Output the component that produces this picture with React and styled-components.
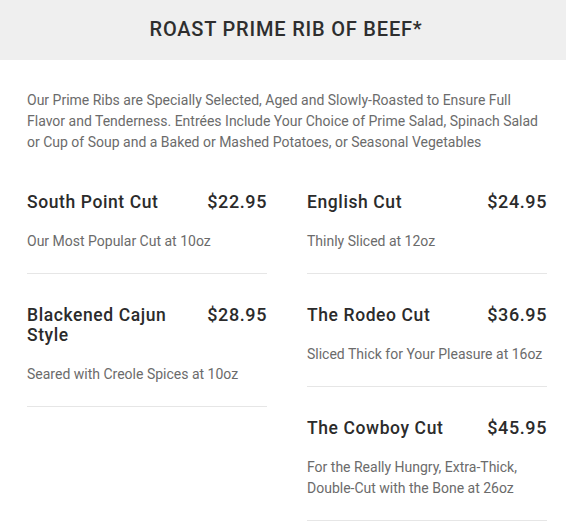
import React from 'react';
import styled, { createGlobalStyle } from 'styled-components';

const items = {
  left: [
    { name: 'South Point Cut', price: '$22.95', desc: 'Our Most Popular Cut at 10oz' },
    { name: 'Blackened Cajun Style', price: '$28.95', desc: 'Seared with Creole Spices at 10oz' },
  ],
  right: [
    { name: 'English Cut', price: '$24.95', desc: 'Thinly Sliced at 12oz' },
    { name: 'The Rodeo Cut', price: '$36.95', desc: 'Sliced Thick for Your Pleasure at 16oz' },
    {
      name: 'The Cowboy Cut',
      price: '$45.95',
      desc: 'For the Really Hungry, Extra-Thick, Double-Cut with the Bone at 26oz',
    },
  ],
};

const App = () => {
  return (
    <>
      <GlobalStyle />
      <Section>
        <Header>
          <Title>ROAST PRIME RIB OF BEEF*</Title>
        </Header>
        <Body>
          <Intro>
            Our Prime Ribs are Specially Selected, Aged and Slowly-Roasted to Ensure Full
            Flavor and Tenderness. Entrées Include Your Choice of Prime Salad, Spinach Salad
            or Cup of Soup and a Baked or Mashed Potatoes, or Seasonal Vegetables
          </Intro>
          <Columns>
            {[items.left, items.right].map((col, i) => (
              <Column key={i}>
                {col.map((item) => (
                  <Item key={item.name}>
                    <ItemHead>
                      <ItemName>{item.name}</ItemName>
                      <Price>{item.price}</Price>
                    </ItemHead>
                    <ItemDesc>{item.desc}</ItemDesc>
                  </Item>
                ))}
              </Column>
            ))}
          </Columns>
        </Body>
      </Section>
    </>
  );
};

// Styled Components
const GlobalStyle = createGlobalStyle`
  body {
    margin: 0;
    background: #fff;
    font-family: Roboto, "Liberation Sans", sans-serif;
  }
`;

const Section = styled.section`
  width: 566px;
`;

const Header = styled.header`
  height: 60px;
  background-color: #efefef;
  display: flex;
  align-items: center;
  justify-content: center;
`;

const Title = styled.h2`
  margin: 0 0 3px 6px;
  font-size: 20px;
  font-weight: 500;
  letter-spacing: 0.8px;
  color: #2e2e2e;
`;

const Body = styled.div`
  padding: 30px 19px 0 27px;
`;

const Intro = styled.p`
  margin: 0 0 39px;
  font-size: 14px;
  line-height: 21px;
  color: #6b6b6b;
`;

const Columns = styled.div`
  display: grid;
  grid-template-columns: 240px 240px;
  column-gap: 40px;
`;

const Column = styled.div`
  display: flex;
  flex-direction: column;
  gap: 31px;
`;

const Item = styled.div`
  padding-bottom: 21px;
  border-bottom: 1px solid #e6e6e6;
`;

const ItemHead = styled.div`
  display: flex;
  justify-content: space-between;
  align-items: flex-start;
  gap: 20px;
`;

const ItemName = styled.h3`
  margin: 0;
  font-size: 17.5px;
  line-height: 20px;
  font-weight: 500;
  letter-spacing: 0.6px;
  color: #2b2b2b;
`;

const Price = styled.span`
  font-size: 18px;
  line-height: 20px;
  font-weight: 500;
  letter-spacing: 0.6px;
  color: #2b2b2b;
  white-space: nowrap;
`;

const ItemDesc = styled.p`
  margin: 19px 0 0;
  font-size: 14px;
  line-height: 21px;
  color: #6b6b6b;
`;

export default App;
